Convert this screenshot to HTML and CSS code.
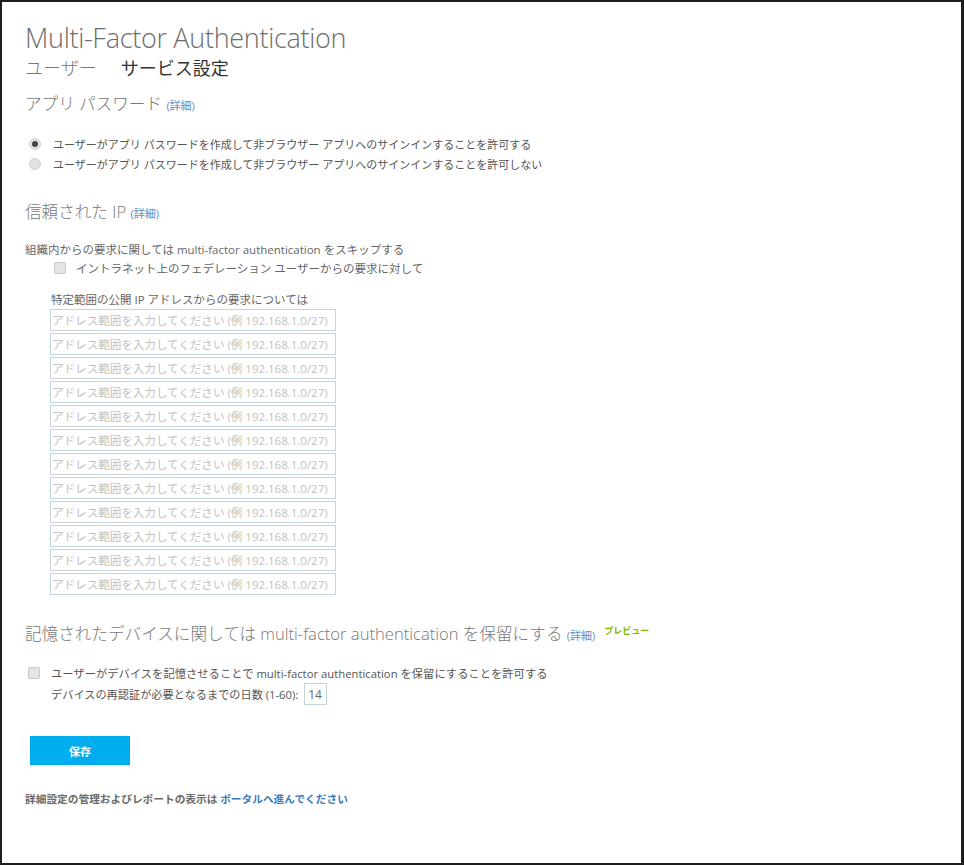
FILE: index.html
```html
<!DOCTYPE html>
<html lang="ja">
<head>
<meta charset="utf-8">
<title>Multi-Factor Authentication</title>
<link rel="stylesheet" href="styles.css">
</head>
<body>
<div class="frame">
  <h1 class="title">Multi-Factor Authentication</h1>
  <div class="tabs">
    <span class="tab">ユーザー</span>
    <span class="tab tab-active">サービス設定</span>
  </div>

  <h2 class="heading">アプリ パスワード <a class="more" href="#">(詳細)</a></h2>
  <div class="radios">
    <label class="row"><input type="radio" name="apppw" class="radio" checked><span>ユーザーがアプリ パスワードを作成して非ブラウザー アプリへのサインインすることを許可する</span></label>
    <label class="row"><input type="radio" name="apppw" class="radio"><span>ユーザーがアプリ パスワードを作成して非ブラウザー アプリへのサインインすることを許可しない</span></label>
  </div>

  <h2 class="heading heading-ip">信頼された IP <a class="more" href="#">(詳細)</a></h2>
  <p class="skip">組織内からの要求に関しては multi-factor authentication をスキップする</p>
  <label class="row fed"><input type="checkbox" class="check"><span>イントラネット上のフェデレーション ユーザーからの要求に対して</span></label>
  <p class="range-label">特定範囲の公開 IP アドレスからの要求については</p>
  <div class="ranges">
    <input class="range" type="text" placeholder="アドレス範囲を入力してください (例 192.168.1.0/27)">
    <input class="range" type="text" placeholder="アドレス範囲を入力してください (例 192.168.1.0/27)">
    <input class="range" type="text" placeholder="アドレス範囲を入力してください (例 192.168.1.0/27)">
    <input class="range" type="text" placeholder="アドレス範囲を入力してください (例 192.168.1.0/27)">
    <input class="range" type="text" placeholder="アドレス範囲を入力してください (例 192.168.1.0/27)">
    <input class="range" type="text" placeholder="アドレス範囲を入力してください (例 192.168.1.0/27)">
    <input class="range" type="text" placeholder="アドレス範囲を入力してください (例 192.168.1.0/27)">
    <input class="range" type="text" placeholder="アドレス範囲を入力してください (例 192.168.1.0/27)">
    <input class="range" type="text" placeholder="アドレス範囲を入力してください (例 192.168.1.0/27)">
    <input class="range" type="text" placeholder="アドレス範囲を入力してください (例 192.168.1.0/27)">
    <input class="range" type="text" placeholder="アドレス範囲を入力してください (例 192.168.1.0/27)">
    <input class="range" type="text" placeholder="アドレス範囲を入力してください (例 192.168.1.0/27)">
  </div>

  <h2 class="heading heading-dev">記憶されたデバイスに関しては multi-factor authentication を保留にする <a class="more" href="#">(詳細)</a><span class="preview">プレビュー</span></h2>
  <label class="row remember"><input type="checkbox" class="check"><span>ユーザーがデバイスを記憶させることで multi-factor authentication を保留にすることを許可する</span></label>
  <div class="days">
    <span>デバイスの再認証が必要となるまでの日数 (1-60):</span>
    <input class="days-input" type="text" value="14">
  </div>

  <button class="save" type="button">保存</button>

  <p class="footer">詳細設定の管理およびレポートの表示は <a class="portal" href="#">ポータルへ進んでください</a></p>
</div>
</body>
</html>
```

FILE: styles.css
```css
* { box-sizing: border-box; }
html, body { margin: 0; padding: 0; background: #fff; }
body {
  font-family: "Open Sans", "Noto Sans CJK JP", sans-serif;
  color: #666;
}
.frame {
  width: 964px;
  height: 865px;
  border: 2px solid #1e1e1e;
  border-right-width: 3px;
  padding: 19px 0 0 23px;
  display: flex;
  flex-direction: column;
  align-items: flex-start;
}
.title {
  margin: 0;
  font-size: 27px;
  line-height: 34px;
  font-weight: 300;
  color: #6e6e6e;
  letter-spacing: -0.3px;
}
.tabs {
  margin-top: 1px;
  display: flex;
  gap: 24px;
  font-size: 18px;
  line-height: 24px;
  font-weight: 300;
}
.tab { color: #777; }
.tab-active { color: #333; font-weight: 400; }
.heading {
  margin: 12px 0 0;
  height: 24px;
  font-size: 16.6px;
  line-height: 24px;
  font-weight: 300;
  color: #777;
  white-space: nowrap;
}
.heading-ip { margin-top: 26px; }
.heading-dev { margin-top: 27px; }
.more {
  font-size: 11px;
  line-height: 1;
  color: #5b8fcb;
  text-decoration: none;
  font-weight: 400;
}
.preview {
  font-size: 9px;
  line-height: 1;
  font-weight: 700;
  color: #7fb900;
  margin-left: 9px;
  vertical-align: 6px;
}
.radios {
  margin-top: 18px;
  display: flex;
  flex-direction: column;
}
.row {
  display: flex;
  align-items: center;
  height: 20px;
  font-size: 11px;
  color: #555;
  white-space: nowrap;
}
.radio {
  appearance: none;
  -webkit-appearance: none;
  width: 12px;
  height: 12px;
  margin: 0 12px 0 4px;
  border-radius: 50%;
  background: #e2e2e2;
  border: 1px solid #d3d3d3;
  position: relative;
}
.radio:checked::after {
  content: "";
  position: absolute;
  left: 2px;
  top: 2px;
  width: 6px;
  height: 6px;
  border-radius: 50%;
  background: #444;
}
.check {
  appearance: none;
  -webkit-appearance: none;
  width: 12px;
  height: 12px;
  margin: 0;
  border: 1px solid #c8c8c8;
  border-radius: 2px;
  background: #e4e4e4;
}
.skip {
  margin: 17px 0 0;
  font-size: 11.5px;
  line-height: 18px;
  color: #666;
}
.fed {
  height: 18px;
  font-size: 11.5px;
  color: #666;
  padding-left: 29px;
}
.fed .check { margin-right: 10px; }
.range-label {
  margin: 14px 0 0 26px;
  font-size: 11.5px;
  line-height: 18px;
  color: #666;
}
.ranges {
  margin-left: 25px;
  display: flex;
  flex-direction: column;
  gap: 2px;
}
.range {
  width: 286px;
  height: 22px;
  margin: 0;
  padding: 0 1px;
  border: 1px solid #c5d2df;
  font-family: "Open Sans", "Noto Sans CJK JP", sans-serif;
  font-size: 11.6px;
  letter-spacing: -0.05px;
  color: #444;
  outline: none;
}
.range::placeholder { color: #c2c2c2; }
.remember {
  margin-top: 17px;
  padding-left: 3px;
  font-size: 11.3px;
}
.remember .check { margin-right: 11px; }
.days {
  margin-left: 26px;
  display: flex;
  align-items: center;
  gap: 6px;
  height: 22px;
  font-size: 11.2px;
  color: #555;
}
.days-input {
  width: 23px;
  height: 22px;
  margin: 0;
  padding: 0 3px;
  border: 1px solid #c5d2df;
  font-family: "Open Sans", "Noto Sans CJK JP", sans-serif;
  font-size: 12px;
  color: #666;
  outline: none;
}
.save {
  margin: 31px 0 0 5px;
  width: 100px;
  height: 29px;
  border: none;
  background: #00adef;
  color: #fff;
  font-family: "Noto Sans CJK JP", sans-serif;
  font-size: 11px;
  font-weight: 700;
  padding: 0;
}
.footer {
  margin: 26px 0 0;
  font-size: 10.7px;
  line-height: 16px;
  font-weight: 700;
  color: #6a6a6a;
}
.portal {
  color: #3a7ab8;
  text-decoration: none;
}
```
